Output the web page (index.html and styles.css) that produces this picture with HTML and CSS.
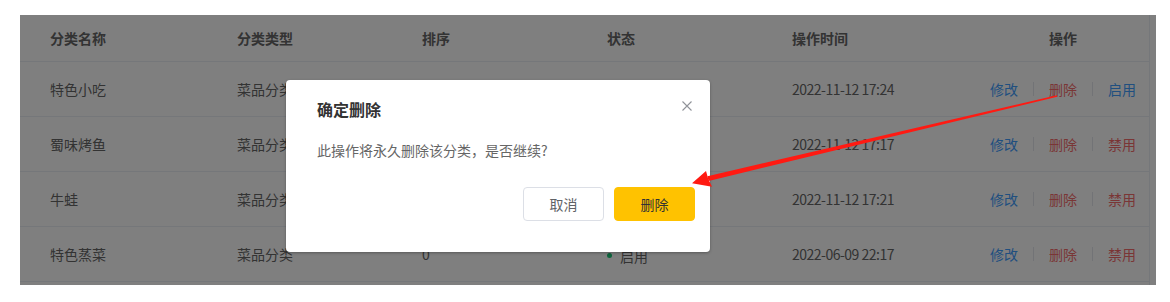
FILE: index.html
```html
<!DOCTYPE html>
<html lang="zh-CN">
<head>
<meta charset="utf-8">
<title>分类管理</title>
<link rel="stylesheet" href="styles.css">
</head>
<body>
<div class="page">
  <div class="table-wrap">
    <div class="table">
      <div class="row head">
        <div class="cell">分类名称</div>
        <div class="cell">分类类型</div>
        <div class="cell">排序</div>
        <div class="cell">状态</div>
        <div class="cell">操作时间</div>
        <div class="cell center">操作</div>
      </div>
      <div class="row">
        <div class="cell">特色小吃</div>
        <div class="cell">菜品分类</div>
        <div class="cell">1</div>
        <div class="cell"><span class="status off"><i class="dot"></i>禁用</span></div>
        <div class="cell time">2022-11-12 17:24</div>
        <div class="cell center"><span class="ops"><a class="op blue">修改</a><i class="sep"></i><a class="op red">删除</a><i class="sep"></i><a class="op blue">启用</a></span></div>
      </div>
      <div class="row">
        <div class="cell">蜀味烤鱼</div>
        <div class="cell">菜品分类</div>
        <div class="cell">2</div>
        <div class="cell"><span class="status"><i class="dot"></i>启用</span></div>
        <div class="cell time">2022-11-12 17:17</div>
        <div class="cell center"><span class="ops"><a class="op blue">修改</a><i class="sep"></i><a class="op red">删除</a><i class="sep"></i><a class="op red">禁用</a></span></div>
      </div>
      <div class="row">
        <div class="cell">牛蛙</div>
        <div class="cell">菜品分类</div>
        <div class="cell">3</div>
        <div class="cell"><span class="status"><i class="dot"></i>启用</span></div>
        <div class="cell time">2022-11-12 17:21</div>
        <div class="cell center"><span class="ops"><a class="op blue">修改</a><i class="sep"></i><a class="op red">删除</a><i class="sep"></i><a class="op red">禁用</a></span></div>
      </div>
      <div class="row">
        <div class="cell">特色蒸菜</div>
        <div class="cell">菜品分类</div>
        <div class="cell">0</div>
        <div class="cell"><span class="status"><i class="dot"></i>启用</span></div>
        <div class="cell time">2022-06-09 22:17</div>
        <div class="cell center"><span class="ops"><a class="op blue">修改</a><i class="sep"></i><a class="op red">删除</a><i class="sep"></i><a class="op red">禁用</a></span></div>
      </div>
    </div>
    <div class="mask"></div>
    <div class="dialog">
      <div class="dialog-head">
        <span class="dialog-title">确定删除</span>
        <svg class="close" width="10" height="10" viewBox="0 0 10 10"><path d="M0.5 0.5 L9.5 9.5 M9.5 0.5 L0.5 9.5" stroke="#909399" stroke-width="1.1" fill="none"/></svg>
      </div>
      <div class="dialog-body">此操作将永久删除该分类，是否继续?</div>
      <div class="dialog-foot">
        <button class="btn">取消</button>
        <button class="btn primary">删除</button>
      </div>
    </div>
  </div>
  <svg class="arrow" width="1170" height="302" viewBox="0 0 1170 302">
    <polygon fill="#ff1a12" points="1057.2,96.8 1056.8,95.2 707.4,176.2 708.6,181.0"/>
    <polygon fill="#ff1a12" points="692,183.2 706,171 708.2,178.8 712,186.8"/>
  </svg>
</div>
</body>
</html>
```

FILE: styles.css
```css
* { box-sizing: border-box; }
html, body { margin: 0; padding: 0; background: #fff; }
body {
  font-family: "Noto Sans CJK SC", "Noto Sans", sans-serif;
  font-size: 14px;
  color: #666;
}
.page {
  position: relative;
  width: 1170px;
  height: 302px;
  padding: 15px 0 0 20px;
}
.table-wrap {
  position: relative;
  width: 1136px;
  height: 270px;
  background: #fff;
  padding-right: 6px;
}
.table {
  border-right: 1px solid #ebeef5;
  height: 100%;
}
.row {
  display: grid;
  grid-template-columns: 187px 185px 185px 185px 215px 172px;
  height: 55px;
  border-bottom: 1px solid #ebeef5;
  align-items: center;
}
.row.head {
  height: 47px;
  font-weight: 700;
  color: #666;
}
.cell {
  padding-left: 30px;
  white-space: nowrap;
  line-height: 18px;
}
.cell.time {
  letter-spacing: -0.5px;
}
.cell.center {
  padding-left: 0;
  text-align: center;
}
.ops {
  display: inline-flex;
  align-items: center;
  gap: 15px;
}
.op { cursor: pointer; }
.op.blue { color: #419eff; }
.op.red { color: #f56c6c; }
.sep {
  display: block;
  width: 1px;
  height: 14px;
  background: #e4e7ed;
}
.status {
  display: inline-flex;
  align-items: center;
  gap: 8px;
}
.dot {
  display: block;
  width: 5px;
  height: 5px;
  border-radius: 50%;
  background: #1dc779;
}
.status.off .dot { background: #fd3333; }
.mask {
  position: absolute;
  inset: 0;
  background: rgba(0, 0, 0, 0.5);
}
.dialog {
  position: absolute;
  left: 266px;
  top: 65px;
  width: 424px;
  height: 172px;
  background: #fff;
  border-radius: 4px;
  box-shadow: 0 1px 3px rgba(0, 0, 0, 0.3);
  padding: 17px 15px 0 31px;
}
.dialog-head {
  position: relative;
  height: 24px;
  line-height: 24px;
}
.dialog-title {
  font-size: 16px;
  font-weight: 700;
  color: #333;
}
.close {
  position: absolute;
  right: 3px;
  top: 4px;
}
.dialog-body {
  margin-top: 19px;
  line-height: 20px;
  color: #666;
}
.dialog-foot {
  margin-top: 27px;
  display: flex;
  justify-content: flex-end;
  gap: 10px;
}
.btn {
  width: 81px;
  height: 34px;
  border-radius: 4px;
  border: 1px solid #dcdfe6;
  background: #fff;
  color: #606266;
  font-family: inherit;
  font-size: 14px;
  padding: 0;
}
.btn.primary {
  background: #ffc200;
  border-color: #ffc200;
  color: #333;
}
.arrow {
  position: absolute;
  left: 0;
  top: 0;
  pointer-events: none;
}
```
